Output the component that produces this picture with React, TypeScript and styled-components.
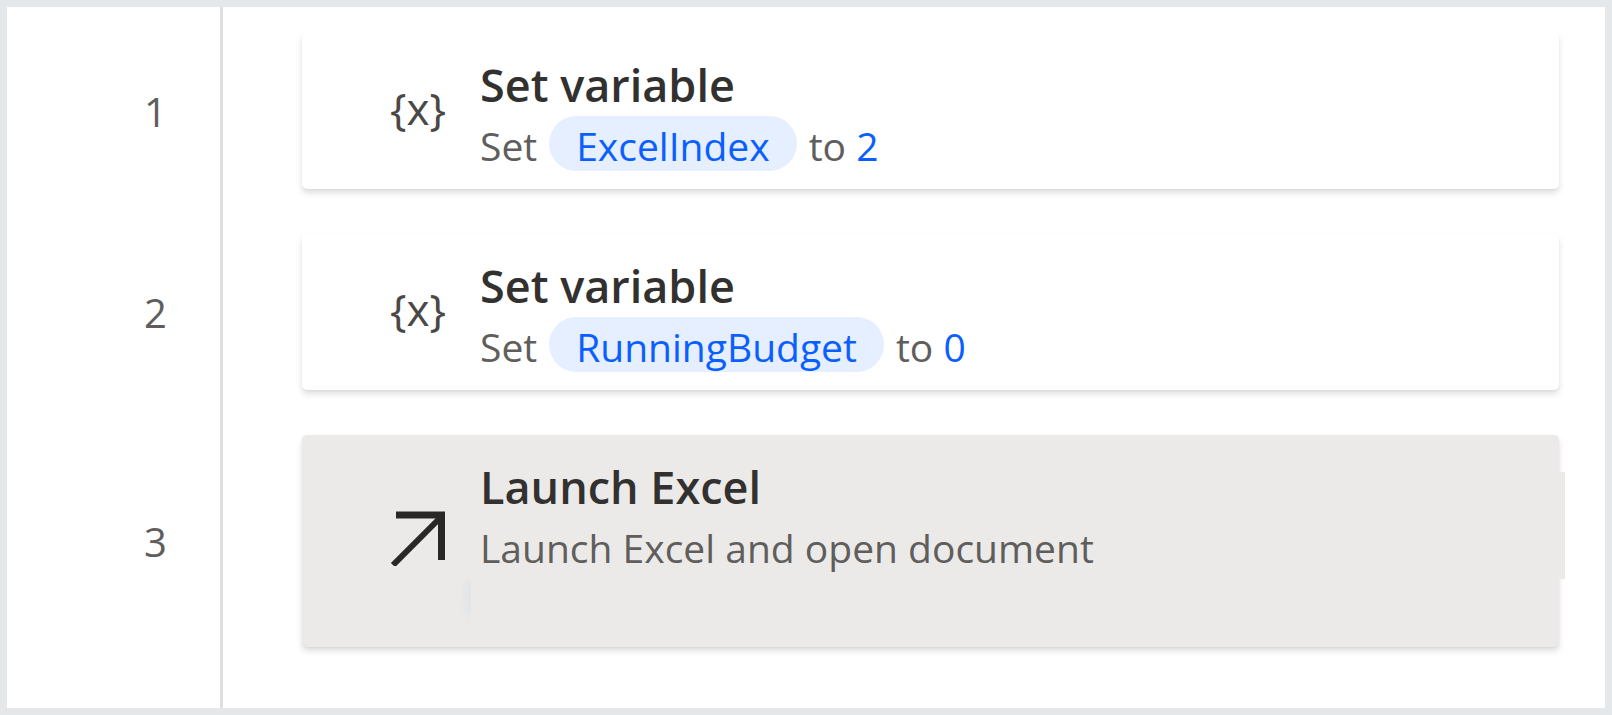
import React from "react";
import styled, { createGlobalStyle } from "styled-components";

const GlobalStyle = createGlobalStyle`
  *, *::before, *::after { box-sizing: border-box; }
  body {
    margin: 0;
    background: #fff;
    font-family: "Open Sans", "Noto Sans", sans-serif;
  }
`;

const Designer = styled.main`
  min-height: 100vh;
  padding: 26px 46px 26px 0;
  border: 7px solid #e4e8eb;
  background: linear-gradient(#e1dfdd, #e1dfdd) 213px 0 / 3px 100% no-repeat #fff;
`;

const Steps = styled.ol`
  display: flex;
  flex-direction: column;
  gap: 45px;
  margin: 0;
  padding: 0;
  list-style: none;
`;

const Step = styled.li`
  display: flex;
`;

const LineNumber = styled.span`
  flex: 0 0 295px;
  display: flex;
  align-items: center;
  padding: 2px 0 0 137px;
  color: #605e5c;
  font-size: 40px;
  line-height: 56px;
`;

const Card = styled.article<{ $selected?: boolean }>`
  position: relative;
  flex: 1;
  display: flex;
  min-height: ${(p) => (p.$selected ? 212 : 156)}px;
  padding: 21px 24px 12px 80px;
  border-radius: 5px;
  background: ${(p) => (p.$selected ? "#ebeae8" : "#fff")};
  box-shadow: 0 4px 6px rgba(0, 0, 0, 0.13), 0 1px 2px rgba(0, 0, 0, 0.04);
`;

const IconSlot = styled.span`
  flex: 0 0 98px;
  display: flex;
  align-items: center;
  padding: 0 0 16px 8px;
  color: #4a4846;
  font-size: 44px;
  line-height: 60px;
`;

const Body = styled.div`
  min-width: 0;
`;

const Title = styled.h2`
  margin: 0;
  color: #323130;
  font-size: 45px;
  font-weight: 600;
  line-height: 62px;
`;

const Summary = styled.p`
  display: flex;
  align-items: baseline;
  margin: 0;
  color: #605e5c;
  font-size: 39px;
  line-height: 59px;
  white-space: pre;
`;

const Variable = styled.span`
  margin: 0 12px;
  padding: 4px 27px 0;
  border-radius: 28px;
  background: #e5efff;
  color: #0b5fff;
  line-height: 51px;
`;

const Value = styled.span`
  color: #0b5fff;
`;

const DragEdge = styled.span`
  position: absolute;
  top: 37px;
  right: -6px;
  width: 6px;
  height: 107px;
  background: #ebeae8;
`;

const InsertMark = styled.span`
  position: absolute;
  top: 144px;
  left: 158px;
  width: 11px;
  height: 48px;
  background: radial-gradient(ellipse at 100% 35%, #e1e3e9, #ebeae8 75%);
`;

const assignments = [
  { name: "ExcelIndex", value: "2" },
  { name: "RunningBudget", value: "0" },
];

const LaunchIcon = () => (
  <svg width="56" height="56" viewBox="0 0 56 56" fill="none" stroke="#292827" strokeWidth="7" aria-hidden="true">
    <path d="M6 5H51.500V50" />
    <path d="M3 55L51 7" strokeWidth="6" />
  </svg>
);

export default function App() {
  return (
    <>
      <GlobalStyle />
      <Designer>
        <Steps>
          {assignments.map((item, index) => (
            <Step key={item.name}>
              <LineNumber>{index + 1}</LineNumber>
              <Card>
                <IconSlot aria-hidden="true">{"{x}"}</IconSlot>
                <Body>
                  <Title>Set variable</Title>
                  <Summary>
                    Set<Variable>{item.name}</Variable>to <Value>{item.value}</Value>
                  </Summary>
                </Body>
              </Card>
            </Step>
          ))}
          <Step>
            <LineNumber>3</LineNumber>
            <Card $selected>
              <IconSlot>
                <LaunchIcon />
              </IconSlot>
              <Body>
                <Title>Launch Excel</Title>
                <Summary>Launch Excel and open document</Summary>
              </Body>
              <DragEdge />
              <InsertMark />
            </Card>
          </Step>
        </Steps>
      </Designer>
    </>
  );
}
